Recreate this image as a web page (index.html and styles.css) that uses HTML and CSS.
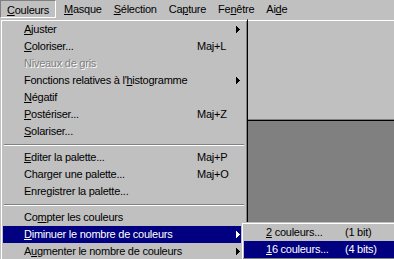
FILE: index.html
```html
<!DOCTYPE html>
<html lang="fr">

<head>
    <meta charset="UTF-8">
    <title>Couleurs</title>
    <link rel="stylesheet" href="styles.css">
</head>

<body>
    <div class="app">
        <!-- menu bar -->
        <div class="menubar">
            <span class="bar-item pressed"><u>C</u>ouleurs</span>
            <span class="bar-item"><u>M</u>asque</span>
            <span class="bar-item"><u>S</u>élection</span>
            <span class="bar-item">Ca<u>p</u>ture</span>
            <span class="bar-item">Fe<u>n</u>être</span>
            <span class="bar-item">Ai<u>d</u>e</span>
        </div>

        <div class="workspace">
            <div class="panel"></div>
            <div class="mdi"></div>
        </div>

        <!-- Couleurs dropdown -->
        <div class="menu main-menu">
            <div class="item"><span><u>A</u>juster</span><span></span><span class="arrow"><svg width="4" height="7"><path d="M0 0h1v7H0zM1 1h1v5H1zM2 2h1v3H2zM3 3h1v1H3z" /></svg></span></div>
            <div class="item"><span><u>C</u>oloriser...</span><span class="key">Maj+L</span><span></span></div>
            <div class="item disabled"><span>Niveaux de <u>g</u>ris</span><span></span><span></span></div>
            <div class="item"><span>Fonctions relatives à l'<u>h</u>istogramme</span><span></span><span class="arrow"><svg width="4" height="7"><path d="M0 0h1v7H0zM1 1h1v5H1zM2 2h1v3H2zM3 3h1v1H3z" /></svg></span></div>
            <div class="item"><span><u>N</u>égatif</span><span></span><span></span></div>
            <div class="item"><span><u>P</u>ostériser...</span><span class="key">Maj+Z</span><span></span></div>
            <div class="item"><span><u>S</u>olariser...</span><span></span><span></span></div>
            <div class="separator"></div>
            <div class="item"><span><u>E</u>diter la palette...</span><span class="key">Maj+P</span><span></span></div>
            <div class="item"><span>Char<u>g</u>er une palette...</span><span class="key">Maj+O</span><span></span></div>
            <div class="item"><span>Enre<u>g</u>istrer la palette...</span><span></span><span></span></div>
            <div class="separator"></div>
            <div class="item"><span>Co<u>m</u>pter les couleurs</span><span></span><span></span></div>
            <div class="item active"><span><u>D</u>iminuer le nombre de couleurs</span><span></span><span class="arrow"><svg width="4" height="7"><path d="M0 0h1v7H0zM1 1h1v5H1zM2 2h1v3H2zM3 3h1v1H3z" /></svg></span></div>
            <div class="item"><span>A<u>u</u>gmenter le nombre de couleurs</span><span></span><span class="arrow"><svg width="4" height="7"><path d="M0 0h1v7H0zM1 1h1v5H1zM2 2h1v3H2zM3 3h1v1H3z" /></svg></span></div>
        </div>

        <!-- Diminuer submenu -->
        <div class="menu sub-menu">
            <div class="item"><span><u>2</u> couleurs...</span><span>(1 bit)</span></div>
            <div class="item active"><span><u>1</u>6 couleurs...</span><span>(4 bits)</span></div>
        </div>
    </div>
</body>

</html>
```

FILE: styles.css
```css
body {
    margin: 0;
    background: #c0c0c0;
}

.app {
    position: relative;
    width: 394px;
    height: 259px;
    overflow: hidden;
    background: #c0c0c0;
    font-family: 'Liberation Sans', Arial, sans-serif;
    font-size: 11px;
    letter-spacing: -0.25px;
    color: #000;
}

u {
    text-decoration: underline;
    text-underline-offset: 1px;
}

/* menu bar */

.menubar {
    display: flex;
    height: 19px;
}

.bar-item {
    height: 18px;
    line-height: 18px;
    padding: 0 6px;
    box-sizing: border-box;
}

.bar-item.pressed {
    border: 1px solid;
    border-color: #808080 #fff #fff #808080;
    line-height: 16px;
    padding: 1px 6px 0 6px;
    margin-right: 2px;
}

/* window area behind the menus */

.workspace {
    display: flex;
    flex-direction: column;
    height: 240px;
}

.panel {
    height: 98px;
    border-top: 1px solid #fff;
    margin-top: 1px;
}

.mdi {
    flex: 1;
    background: #808080;
    border-top: 1px solid #808080;
    box-shadow: inset 0 1px #000;
}

/* popup menus */

.menu {
    position: absolute;
    background: #c0c0c0;
    border: 1px solid;
    border-color: #c0c0c0 #000 #000 #c0c0c0;
    box-shadow: inset 1px 1px #fff, inset -1px -1px #808080;
    padding: 1px 2px;
}

.main-menu {
    left: 0;
    top: 19px;
    width: 242px;
    height: 260px;
}

.sub-menu {
    left: 241px;
    top: 222px;
    width: 200px;
}

.item {
    display: grid;
    grid-template-columns: 1fr 39px 9px;
    height: 17px;
    line-height: 17px;
    padding-left: 21px;
    white-space: nowrap;
}

.sub-menu .item {
    grid-template-columns: 79px 1fr;
    padding-left: 22px;
}

.item.active {
    background: #000080;
    color: #fff;
}

.item.disabled {
    color: #808080;
    text-shadow: 1px 1px #fff;
}

.arrow {
    display: flex;
    align-items: center;
}

.arrow svg {
    display: block;
    fill: currentColor;
    shape-rendering: crispEdges;
}

.separator {
    height: 9px;
    margin: 0 1px;
    background: linear-gradient(#c0c0c0 4px, #808080 4px, #808080 5px, #fff 5px, #fff 6px, #c0c0c0 6px);
}
```
